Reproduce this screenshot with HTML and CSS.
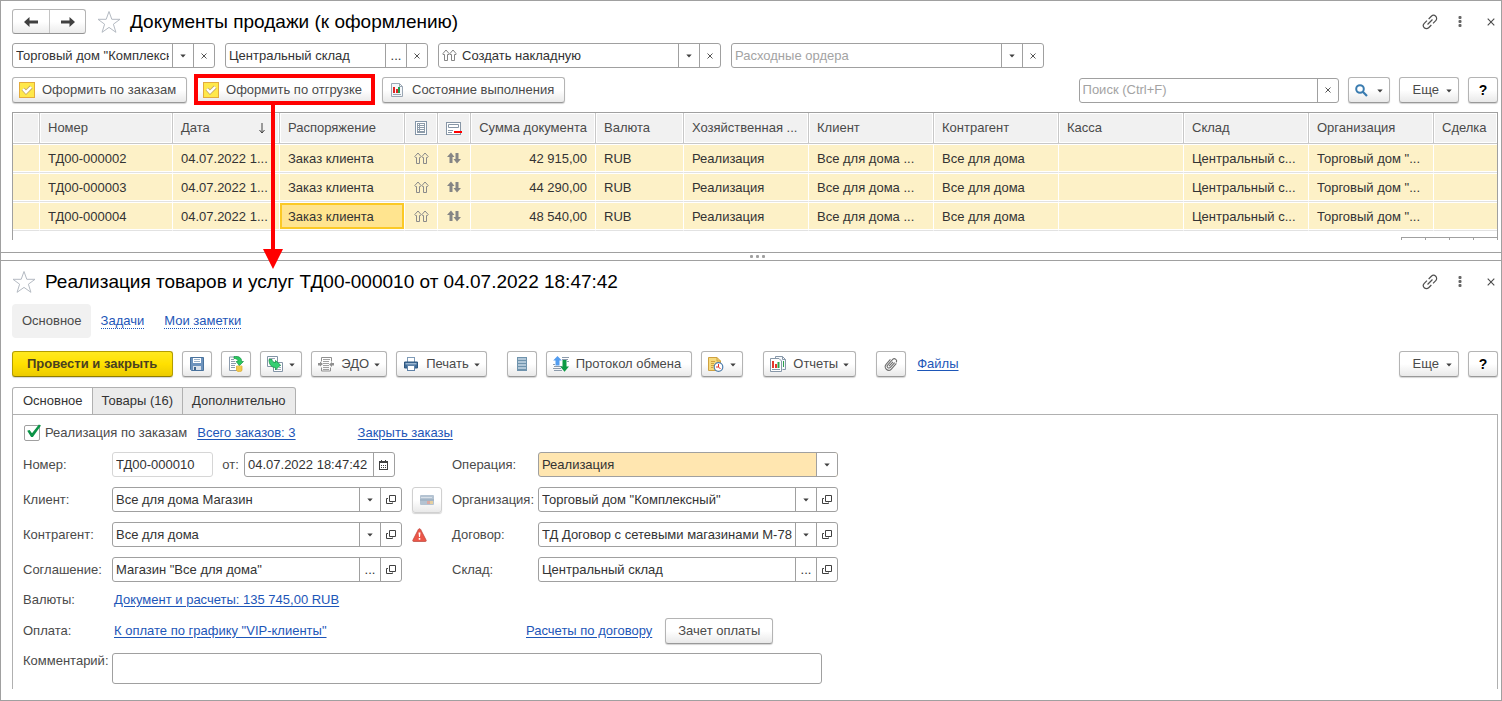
FILE: index.html
```html
<!DOCTYPE html>
<html lang="ru">
<head>
<meta charset="utf-8">
<title>Документы продажи (к оформлению)</title>
<link rel="stylesheet" href="styles.css">
</head>
<body>
<svg class="sprite" aria-hidden="true">
  <symbol id="i-back" viewBox="0 0 16 12"><path d="M1 6 L6.500 1 V4.500 H15 V7.500 H6.500 V11 Z" fill="#404040"/></symbol>
  <symbol id="i-star" viewBox="0 0 24 24"><path d="M12 1.500 L14.800 9.300 H23 L16.400 14.200 L18.900 22.300 L12 17.400 L5.100 22.300 L7.600 14.200 L1 9.300 H9.200 Z" fill="#fff" stroke="#b4bac2"/></symbol>
  <symbol id="i-link" viewBox="0 0 16 16"><g transform="rotate(-45 8 8)" fill="none" stroke="#505050" stroke-width="1.200"><path d="M6.800 4.900 H3 A3.100 3.100 0 0 0 3 11.100 H6.800"/><path d="M9.200 4.900 H13 A3.100 3.100 0 0 1 13 11.100 H9.200"/><path d="M4.500 8 H11.500"/></g></symbol>
  <symbol id="i-more" viewBox="0 0 4 12"><g fill="#666"><rect x="0.500" y="0" width="3" height="3" rx="1"/><rect x="0.500" y="4" width="3" height="3" rx="1"/><rect x="0.500" y="8" width="3" height="3" rx="1"/></g></symbol>
  <symbol id="i-close" viewBox="0 0 8 8"><path d="M0.700 0.700 L7.300 7.300 M7.300 0.700 L0.700 7.300" stroke="#4a4a4a" stroke-width="1.100"/></symbol>
  <symbol id="i-clear" viewBox="0 0 6 6"><path d="M0.500 0.500 L5.500 5.500 M5.500 0.500 L0.500 5.500" stroke="#555"/></symbol>
  <symbol id="i-caret" viewBox="0 0 6 4"><path d="M0.300 0.500 H5.700 L3 3.500 Z" fill="#404040"/></symbol>
  <symbol id="i-open" viewBox="0 0 10 10"><path d="M3.500 0.500 H9.500 V6.500 H3.500 Z M2 3.500 H0.500 V8.500 H6.500 V7.500" fill="none" stroke="#404040"/></symbol>
  <symbol id="i-check" viewBox="0 0 16 16"><rect x="0.500" y="0.500" width="15" height="15" fill="#ffe84a" stroke="#e3ab3c"/><path d="M4 7 L7 10.200 L12.200 5" fill="none" stroke="#c2a765" stroke-width="4"/><path d="M4 7 L7 10.200 L12.200 5" fill="none" stroke="#fff" stroke-width="2.400"/></symbol>
  <symbol id="i-report" viewBox="0 0 14 15"><path d="M1.500 0.500 H9.500 L12.500 3.500 V13.500 H1.500 Z" fill="#f4f7fa" stroke="#9aa6b3"/><path d="M9.500 0.500 V3.500 H12.500" fill="none" stroke="#9aa6b3"/><rect x="3" y="4" width="2" height="6" fill="#e02424"/><rect x="6" y="6" width="2" height="4" fill="#e02424"/><rect x="8" y="4" width="2" height="6" fill="#1f9d4c"/><path d="M3 11.500 H11" stroke="#9aa6b3"/></symbol>
  <symbol id="i-ups" viewBox="0 0 15 13"><g fill="#fff" stroke="#858585"><path d="M4 1 L7 4.500 V5.500 H5.500 V11.500 H2.500 V5.500 H1 V4.500 Z"/><path d="M11 1 L14 4.500 V5.500 H12.500 V11.500 H9.500 V5.500 H8 V4.500 Z"/></g></symbol>
  <symbol id="i-cellups" viewBox="0 0 15 13"><g fill="none" stroke="#8a8a8a"><path d="M4 1 L7 4.500 L6.500 5.500 H5.500 V11.500 H2.500 V5.500 H1.500 L0.800 4.500 Z"/><path d="M11 1 L14.200 4.500 L13.500 5.500 H12.500 V11.500 H9.500 V5.500 H8.500 L8 4.500 Z"/></g></symbol>
  <symbol id="i-updown" viewBox="0 0 14 12"><g fill="#858585"><path d="M4 0.500 L7.500 5 H5.500 V11 H2.500 V5 H0 Z"/><path d="M8.500 1 H11.500 V7 H14 L10 11.500 L6.500 7 H8.500 Z"/></g></symbol>
  <symbol id="i-doc" viewBox="0 0 12 14"><rect x="0.500" y="0.500" width="11" height="13" fill="#fff" stroke="#8496a8"/><path d="M2.500 2.500 H9.500 M2.500 4.500 H9.500 M2.500 6.500 H9.500 M2.500 8.500 H9.500 M2.500 10.500 H9.500 M4.500 2 V12 M9.500 2 V12 M2.500 2 V12 M2.500 11.500 H9.500" stroke="#8d9caa" fill="none"/></symbol>
  <symbol id="i-minus" viewBox="0 0 16 13"><rect x="0.500" y="0.500" width="14" height="12" fill="#fff" stroke="#8796a6"/><path d="M2.500 5.500 V2.500 H12.500 V5.500 H2.500 M2 8.500 H7 M2 10.500 H6" stroke="#8796a6" fill="none"/><rect x="8" y="9" width="8" height="2" fill="#f00"/></symbol>
  <symbol id="i-sort" viewBox="0 0 6 11"><path d="M3 0 V9.500 M0.500 7 L3 10 L5.500 7" stroke="#404040" fill="none"/></symbol>
  <symbol id="i-search" viewBox="0 0 13 13"><circle cx="5" cy="5" r="3.800" fill="none" stroke="#3a7cb0" stroke-width="2"/><path d="M7.800 7.800 L12 12" stroke="#3a7cb0" stroke-width="2.200"/></symbol>
  <symbol id="i-save" viewBox="0 0 14 14"><path d="M0.500 0.500 H13.500 V13.500 H1.500 L0.500 12.500 Z" fill="#6d93bd" stroke="#49729d"/><rect x="3" y="1" width="8" height="5" fill="#fff"/><path d="M4 2.500 H10 M4 4.500 H10" stroke="#9bb3cb"/><rect x="3" y="9" width="8" height="4" fill="#d9e1ea"/><rect x="4" y="10" width="2" height="3" fill="#3f648c"/></symbol>
  <symbol id="i-post" viewBox="0 0 16 16"><path d="M1.500 1 H11 V14.500 H1.500 Z" fill="#fff" stroke="#8c9bac"/><path d="M3 3.500 H6 M3 5.500 H7 M3 7.500 H8 M3 9.500 H7 M3 11.500 H7" stroke="#8c9bac"/><path d="M6 0.500 C11 0 14 2 13.500 5.500 H15.500 L11.500 9.500 L8 5.500 H10 C10 3.500 8.500 2.500 6 2.500 Z" fill="#2bc95f" stroke="#169346" stroke-width="0.700"/><path d="M8.500 10 V14.500 C9 16 13.500 16 14 14.500 V10 Z" fill="#ffe060" stroke="#d9a62b" stroke-width="0.700"/><path d="M8.500 12 H14 M8.500 14 H14" stroke="#d9a62b" stroke-width="0.800"/></symbol>
  <symbol id="i-based" viewBox="0 0 16 16"><path d="M0.500 0.500 H10.500 V10.500 H0.500 Z" fill="#fff" stroke="#8394a6"/><path d="M6.500 6.500 H15.500 V15.500 H6.500 Z" fill="#fff" stroke="#8394a6"/><path d="M2 2.500 H8 M12 9.500 H14 M12 11.500 H14 M8 13.500 H14" stroke="#9ca9b7"/><path d="M2 3.500 H5 C5 5.500 6.500 6.500 8.500 6.500 V4.500 L13.500 9 L8.500 14 V11.500 C4.500 11.500 2 8.500 2 3.500 Z" fill="#35cf72" stroke="#159447" stroke-width="0.800"/></symbol>
  <symbol id="i-edo" viewBox="0 0 16 15"><path d="M3.500 4.500 V0.500 H13.500 V4.500 M3.500 10.500 V14 H12.500 V10.500" fill="none" stroke="#909090"/><path d="M5 2.500 H12 M5 4.500 H11 M5 6.500 H11 M5 8.500 H11 M5 10.500 H11 M5 12.500 H11" stroke="#a0a0a0"/><path d="M0 8.500 V6 H2 V4.500 L5 7 L2 9.500 V8.500 Z M16 6 V8.500 H14 V10 L11 7.500 L14 5 V6 Z" fill="#909090"/></symbol>
  <symbol id="i-print" viewBox="0 0 14 14"><rect x="3.500" y="0.500" width="7" height="5" fill="#fff" stroke="#7f9bb8"/><path d="M0.500 5 H13.500 V11 H0.500 Z" fill="#3f6c99" stroke="#2f567e"/><rect x="1.500" y="6" width="11" height="1.500" fill="#9db7d2"/><rect x="3.500" y="8.500" width="7" height="5" fill="#fff" stroke="#5f82a8"/></symbol>
  <symbol id="i-list" viewBox="0 0 10 14"><rect x="0" y="0" width="10" height="14" fill="#6f93ad"/><path d="M1 2 H9 M1 5 H9 M1 8 H9 M1 11 H9" stroke="#c7d9e6" stroke-width="1.500"/></symbol>
  <symbol id="i-exchange" viewBox="0 0 16 16"><path d="M1 10.500 H9 M0 12.500 H8 M1 14.500 H9 M9 1.500 H16 M9 3.500 H15 M0 8.500 H2 M14 5.500 H16" stroke="#8c9bac"/><path d="M4.500 0 L8.800 4.500 H6.500 V9.500 H2.500 V4.500 H0.200 Z" fill="#539df0"/><path d="M9.500 4 H13.500 V10.500 H16 L11.500 15.800 L7.200 10.500 H9.500 Z" fill="#0c9a43"/></symbol>
  <symbol id="i-task" viewBox="0 0 16 15"><path d="M0.500 0.500 H9 L12.500 4 V13.500 H0.500 Z" fill="#f6da7c" stroke="#cfa13f"/><path d="M9 0.500 V4 H12.500 M3 6.500 H6 M3 8.500 H6 M3 10.500 H5 M3 4.500 H7" fill="none" stroke="#cfa13f"/><circle cx="10.500" cy="10" r="4.300" fill="#fff" stroke="#4f7fae" stroke-width="1.200"/><path d="M10.500 7 V10 H8 M10.500 10 L12.500 12" stroke="#e0312a" fill="none"/></symbol>
  <symbol id="i-reports" viewBox="0 0 16 16"><path d="M5.500 3 V0.500 H12.500 L15.500 3.500 V13.500 H12.500" fill="#f6f9fc" stroke="#8797a8"/><path d="M12.500 0.500 V3.500 H15.500" fill="none" stroke="#8797a8"/><path d="M0.500 2.500 H9 L11.500 5 V15.500 H0.500 Z" fill="#fff" stroke="#8797a8"/><path d="M3 5 V12" stroke="#e4382d" stroke-width="2"/><path d="M6 8 V12" stroke="#e4382d" stroke-width="2"/><path d="M8.500 6 V12" stroke="#2aa24b" stroke-width="2"/><path d="M13.500 5 V11" stroke="#2aa24b"/><path d="M2 13.500 H10" stroke="#8797a8"/></symbol>
  <symbol id="i-clip" viewBox="0 0 14 14"><g transform="rotate(42 7 7)"><path d="M8.800 3.500 V10 A1.800 1.800 0 0 1 5.200 10 V2.500 A2.200 2.200 0 0 1 9.600 2.500 M10.600 3 V10.500 A3.500 3.500 0 0 1 3.500 10.500 V4 M7 4 V10" fill="none" stroke="#6e6e6e" stroke-width="1.100"/></g></symbol>
  <symbol id="i-calendar" viewBox="0 0 9 10"><rect x="0.500" y="1.500" width="8" height="8" fill="#fff" stroke="#404040"/><path d="M0 2.500 H9 M2.500 0 V3 M6.500 0 V3" stroke="#404040"/><path d="M2 5.500 H7.500 M2 7.500 H7.500" stroke="#404040" stroke-dasharray="1 1"/></symbol>
  <symbol id="i-card" viewBox="0 0 14 10"><rect width="14" height="10" rx="1" fill="#b4c3d2"/><path d="M1 2.500 H12" stroke="#d8e0e8"/><path d="M0 5 H14" stroke="#93a7ba"/><rect x="7" y="6" width="3" height="3" fill="#dba9a3"/><rect x="10" y="6" width="3" height="3" fill="#e5cfa0"/></symbol>
  <symbol id="i-warn" viewBox="0 0 15 14"><path d="M7.500 0.700 Q8.300 0.700 8.700 1.500 L14.200 12.300 Q14.500 13.400 13.500 13.500 H1.500 Q0.500 13.400 0.800 12.300 L6.300 1.500 Q6.700 0.700 7.500 0.700 Z" fill="#ec5648" stroke="#b8463c" stroke-width="0.700"/><path d="M6.500 4.500 H8.500 L8 9 H7 Z M6.700 10 H8.300 V11.700 H6.700 Z" fill="#fff"/></symbol>
</svg>

<section class="window">
  <header class="title-row">
    <div class="nav-pair">
      <button class="nav-btn" type="button" aria-label="Назад"><svg width="16" height="12"><use href="#i-back"/></svg></button>
      <button class="nav-btn" type="button" aria-label="Вперед"><svg class="flip" width="16" height="12"><use href="#i-back"/></svg></button>
    </div>
    <button class="icon-btn star" type="button" aria-label="В избранное"><svg width="24" height="24"><use href="#i-star"/></svg></button>
    <h1 class="title">Документы продажи (к оформлению)</h1>
    <div class="win-tools">
      <button class="icon-btn" type="button" aria-label="Ссылка"><svg width="16" height="16"><use href="#i-link"/></svg></button>
      <button class="icon-btn" type="button" aria-label="Меню"><svg width="4" height="12"><use href="#i-more"/></svg></button>
      <button class="icon-btn" type="button" aria-label="Закрыть"><svg width="8" height="8"><use href="#i-close"/></svg></button>
    </div>
  </header>

  <div class="filters">
    <div class="field w-filter"><input type="text" aria-label="Организация" value="Торговый дом &quot;Комплексный&quot;"><button type="button" aria-label="Выбрать"><svg width="6" height="4"><use href="#i-caret"/></svg></button><button type="button" aria-label="Очистить"><svg width="6" height="6"><use href="#i-clear"/></svg></button></div>
    <div class="field w-filter"><input type="text" aria-label="Склад" value="Центральный склад"><button type="button" aria-label="Выбрать">...</button><button type="button" aria-label="Очистить"><svg width="6" height="6"><use href="#i-clear"/></svg></button></div>
    <div class="field w-action"><svg class="lead" width="15" height="13"><use href="#i-ups"/></svg><select aria-label="Действие"><option>Создать накладную</option></select><span class="drop"><svg width="6" height="4"><use href="#i-caret"/></svg></span><button type="button" aria-label="Очистить"><svg width="6" height="6"><use href="#i-clear"/></svg></button></div>
    <div class="field w-order"><input type="text" aria-label="Расходные ордера" placeholder="Расходные ордера"><button type="button" aria-label="Выбрать"><svg width="6" height="4"><use href="#i-caret"/></svg></button><button type="button" aria-label="Очистить"><svg width="6" height="6"><use href="#i-clear"/></svg></button></div>
  </div>

  <div class="commands">
    <button class="btn" type="button"><svg width="16" height="16"><use href="#i-check"/></svg>Оформить по заказам</button>
    <div class="callout">
      <button class="btn" type="button"><svg width="16" height="16"><use href="#i-check"/></svg>Оформить по отгрузке</button>
      <div class="callout-frame"></div>
      <svg class="callout-arrow" width="22" height="166" viewBox="0 0 22 166" aria-hidden="true"><path d="M9 0 H13 V146 H21 L11 166 L1 146 H9 Z" fill="#f00"/></svg>
    </div>
    <button class="btn" type="button"><svg width="16" height="15"><use href="#i-report"/></svg>Состояние выполнения</button>
    <div class="field w-search"><input type="text" aria-label="Поиск" placeholder="Поиск (Ctrl+F)"><button type="button" aria-label="Очистить"><svg width="6" height="6"><use href="#i-clear"/></svg></button></div>
    <button class="btn tool" type="button" aria-label="Найти"><svg width="13" height="13"><use href="#i-search"/></svg><svg class="caret" width="6" height="4"><use href="#i-caret"/></svg></button>
    <button class="btn more" type="button">Еще<svg class="caret" width="6" height="4"><use href="#i-caret"/></svg></button>
    <button class="btn square help" type="button">?</button>
  </div>

  <div class="grid-box">
    <table class="list">
      <colgroup><col class="c-mark"><col class="c-num"><col class="c-date"><col class="c-text"><col class="c-icon"><col class="c-icon"><col class="c-text"><col class="c-cur"><col class="c-text"><col class="c-text"><col class="c-text"><col class="c-text"><col class="c-text"><col class="c-text"><col></colgroup>
      <thead>
        <tr><th></th><th>Номер</th><th><div class="sorted">Дата<svg width="6" height="11"><use href="#i-sort"/></svg></div></th><th>Распоряжение</th><th class="ico"><svg width="12" height="14"><use href="#i-doc"/></svg></th><th class="ico"><svg width="16" height="13"><use href="#i-minus"/></svg></th><th class="num">Сумма документа</th><th>Валюта</th><th>Хозяйственная ...</th><th>Клиент</th><th>Контрагент</th><th>Касса</th><th>Склад</th><th>Организация</th><th>Сделка</th></tr>
      </thead>
      <tbody>
        <tr><td></td><td>ТД00-000002</td><td>04.07.2022 1...</td><td>Заказ клиента</td><td class="ico"><svg width="15" height="13"><use href="#i-cellups"/></svg></td><td class="ico"><svg width="14" height="12"><use href="#i-updown"/></svg></td><td class="num">42 915,00</td><td>RUB</td><td>Реализация</td><td>Все для дома ...</td><td>Все для дома</td><td></td><td>Центральный с...</td><td>Торговый дом "...</td><td></td></tr>
        <tr><td></td><td>ТД00-000003</td><td>04.07.2022 1...</td><td>Заказ клиента</td><td class="ico"><svg width="15" height="13"><use href="#i-cellups"/></svg></td><td class="ico"><svg width="14" height="12"><use href="#i-updown"/></svg></td><td class="num">44 290,00</td><td>RUB</td><td>Реализация</td><td>Все для дома ...</td><td>Все для дома</td><td></td><td>Центральный с...</td><td>Торговый дом "...</td><td></td></tr>
        <tr><td></td><td>ТД00-000004</td><td>04.07.2022 1...</td><td class="current"><div>Заказ клиента</div></td><td class="ico"><svg width="15" height="13"><use href="#i-cellups"/></svg></td><td class="ico"><svg width="14" height="12"><use href="#i-updown"/></svg></td><td class="num">48 540,00</td><td>RUB</td><td>Реализация</td><td>Все для дома ...</td><td>Все для дома</td><td></td><td>Центральный с...</td><td>Торговый дом "...</td><td></td></tr>
      </tbody>
    </table>
    <div class="pager"><span></span><span></span><span></span><span></span></div>
  </div>
</section>

<div class="splitter"><span></span><span></span><span></span></div>

<section class="window document">
  <header class="title-row">
    <button class="icon-btn star" type="button" aria-label="В избранное"><svg width="24" height="24"><use href="#i-star"/></svg></button>
    <h2 class="title">Реализация товаров и услуг ТД00-000010 от 04.07.2022 18:47:42</h2>
    <div class="win-tools">
      <button class="icon-btn" type="button" aria-label="Ссылка"><svg width="16" height="16"><use href="#i-link"/></svg></button>
      <button class="icon-btn" type="button" aria-label="Меню"><svg width="4" height="12"><use href="#i-more"/></svg></button>
      <button class="icon-btn" type="button" aria-label="Закрыть"><svg width="8" height="8"><use href="#i-close"/></svg></button>
    </div>
  </header>

  <nav class="sections">
    <a class="active" href="#main">Основное</a>
    <a href="#tasks"><span>Задачи</span></a>
    <a href="#notes"><span>Мои заметки</span></a>
  </nav>

  <div class="commands toolbar">
    <button class="btn primary" type="button">Провести и закрыть</button>
    <button class="btn square" type="button" aria-label="Записать"><svg width="14" height="14"><use href="#i-save"/></svg></button>
    <button class="btn square" type="button" aria-label="Провести"><svg width="16" height="16"><use href="#i-post"/></svg></button>
    <button class="btn tool" type="button" aria-label="Создать на основании"><svg width="16" height="16"><use href="#i-based"/></svg><svg class="caret" width="6" height="4"><use href="#i-caret"/></svg></button>
    <button class="btn" type="button"><svg width="16" height="15"><use href="#i-edo"/></svg>ЭДО<svg class="caret" width="6" height="4"><use href="#i-caret"/></svg></button>
    <button class="btn" type="button"><svg width="16" height="14"><use href="#i-print"/></svg>Печать<svg class="caret" width="6" height="4"><use href="#i-caret"/></svg></button>
    <button class="btn square apart" type="button" aria-label="Реестр"><svg width="10" height="14"><use href="#i-list"/></svg></button>
    <button class="btn" type="button"><svg width="16" height="16"><use href="#i-exchange"/></svg>Протокол обмена</button>
    <button class="btn tool" type="button" aria-label="Напоминания"><svg width="16" height="15"><use href="#i-task"/></svg><svg class="caret" width="6" height="4"><use href="#i-caret"/></svg></button>
    <button class="btn apart" type="button"><svg width="16" height="16"><use href="#i-reports"/></svg>Отчеты<svg class="caret" width="6" height="4"><use href="#i-caret"/></svg></button>
    <button class="btn square apart" type="button" aria-label="Присоединенные файлы"><svg width="14" height="14"><use href="#i-clip"/></svg></button>
    <a class="link files" href="#files">Файлы</a>
    <button class="btn more end" type="button">Еще<svg class="caret" width="6" height="4"><use href="#i-caret"/></svg></button>
    <button class="btn square help" type="button">?</button>
  </div>

  <div class="tabs" role="tablist">
    <button class="tab selected" type="button" role="tab" aria-selected="true">Основное</button>
    <button class="tab" type="button" role="tab" aria-selected="false">Товары (16)</button>
    <button class="tab" type="button" role="tab" aria-selected="false">Дополнительно</button>
  </div>

  <div class="panel">
    <div class="orders">
      <label class="tick"><input type="checkbox" checked>Реализация по заказам</label>
      <a class="link" href="#orders">Всего заказов: 3</a>
      <a class="link close-orders" href="#close">Закрыть заказы</a>
    </div>

    <div class="form">
      <label for="number">Номер:</label>
      <div class="number-date">
        <div class="field muted w-number"><input id="number" type="text" value="ТД00-000010"></div>
        <label for="date">от:</label>
        <div class="field w-date"><input id="date" type="text" value="04.07.2022 18:47:42"><button type="button" aria-label="Календарь"><svg width="9" height="10"><use href="#i-calendar"/></svg></button></div>
      </div>
      <span></span>
      <label for="operation">Операция:</label>
      <div class="field filled"><select id="operation"><option>Реализация</option></select><span class="drop"><svg width="6" height="4"><use href="#i-caret"/></svg></span></div>

      <label for="client">Клиент:</label>
      <div class="field"><input id="client" type="text" value="Все для дома Магазин"><button type="button" aria-label="Выбрать"><svg width="6" height="4"><use href="#i-caret"/></svg></button><button type="button" aria-label="Открыть"><svg width="10" height="10"><use href="#i-open"/></svg></button></div>
      <div class="side"><button class="btn square faded" type="button" aria-label="Карта лояльности"><svg width="14" height="10"><use href="#i-card"/></svg></button></div>
      <label for="org">Организация:</label>
      <div class="field"><input id="org" type="text" value="Торговый дом &quot;Комплексный&quot;"><button type="button" aria-label="Выбрать"><svg width="6" height="4"><use href="#i-caret"/></svg></button><button type="button" aria-label="Открыть"><svg width="10" height="10"><use href="#i-open"/></svg></button></div>

      <label for="partner">Контрагент:</label>
      <div class="field"><input id="partner" type="text" value="Все для дома"><button type="button" aria-label="Выбрать"><svg width="6" height="4"><use href="#i-caret"/></svg></button><button type="button" aria-label="Открыть"><svg width="10" height="10"><use href="#i-open"/></svg></button></div>
      <div class="side"><svg width="15" height="14"><use href="#i-warn"/></svg></div>
      <label for="contract">Договор:</label>
      <div class="field"><input id="contract" type="text" value="ТД Договор с сетевыми магазинами М-78"><button type="button" aria-label="Выбрать"><svg width="6" height="4"><use href="#i-caret"/></svg></button><button type="button" aria-label="Открыть"><svg width="10" height="10"><use href="#i-open"/></svg></button></div>

      <label for="agreement">Соглашение:</label>
      <div class="field"><input id="agreement" type="text" value="Магазин &quot;Все для дома&quot;"><button type="button" aria-label="Выбрать">...</button><button type="button" aria-label="Открыть"><svg width="10" height="10"><use href="#i-open"/></svg></button></div>
      <span></span>
      <label for="store">Склад:</label>
      <div class="field"><input id="store" type="text" value="Центральный склад"><button type="button" aria-label="Выбрать">...</button><button type="button" aria-label="Открыть"><svg width="10" height="10"><use href="#i-open"/></svg></button></div>
    </div>

    <div class="line"><span class="caption">Валюты:</span><div class="line-link"><a class="link" href="#currency">Документ и расчеты: 135 745,00 RUB</a></div></div>
    <div class="line"><span class="caption">Оплата:</span><div class="line-link"><a class="link" href="#payment">К оплате по графику "VIP-клиенты"</a></div><a class="link" href="#settlements">Расчеты по договору</a><button class="btn offset" type="button">Зачет оплаты</button></div>
    <div class="comment"><label for="comment">Комментарий:</label><textarea id="comment" rows="1"></textarea></div>
  </div>
</section>
</body>
</html>
```

FILE: styles.css
```css
* {
  box-sizing: border-box;
}

body {
  margin: 0;
  min-height: 100vh;
  border: 1px solid #a0a0a0;
  background: #fff;
  color: #4a4a4a;
  font: 13px/16px "Liberation Sans", Arial, sans-serif;
}

svg {
  display: block;
  flex: none;
}

button,
input,
select,
textarea {
  margin: 0;
  font: inherit;
  color: inherit;
}

.sprite {
  position: absolute;
  width: 0;
  height: 0;
}

.window {
  display: flex;
  flex-direction: column;
  gap: 9px;
  padding: 8px 3px 12px 11px;
}

/* Title */

.title-row {
  display: flex;
  align-items: center;
  height: 25px;
}

.nav-pair {
  display: flex;
  height: 25px;
  margin-right: 11px;
  border: 1px solid #b4b4b4;
  border-bottom-color: #949494;
  border-radius: 3px;
  background: linear-gradient(#fff 50%, #ececec);
}

.nav-btn {
  display: grid;
  place-items: center;
  width: 36px;
  padding: 0;
  border: 0;
  background: none;
}

.nav-btn + .nav-btn {
  border-left: 1px solid #c4c4c4;
}

.flip {
  transform: scaleX(-1);
}

.icon-btn {
  display: grid;
  place-items: center;
  padding: 0;
  border: 0;
  background: none;
}

.star {
  margin-right: 9px;
}

.title {
  margin: 0;
  color: #000;
  font-size: 19px;
  font-weight: 400;
  line-height: 24px;
}

.win-tools {
  display: flex;
  align-items: center;
  margin-left: auto;
}

.win-tools .icon-btn {
  width: 30px;
  height: 24px;
}

.win-tools .icon-btn:last-child {
  justify-items: end;
  margin-right: 3px;
  width: 20px;
}

/* Entry fields */

.field {
  display: flex;
  align-items: stretch;
  height: 25px;
  border: 1px solid #a0a0a0;
  border-radius: 3px;
  background: #fff;
  color: #333;
}

.field input,
.field select {
  flex: 1;
  min-width: 0;
  padding: 0 3px;
  border: 0;
  border-radius: 2px;
  outline: 0;
  background: none;
  appearance: none;
}

.field input::placeholder {
  color: #a3a3a3;
  opacity: 1;
}

.field button,
.drop {
  display: grid;
  place-items: center;
  flex: none;
  width: 21px;
  padding: 0;
  border: 0;
  border-left: 1px solid #a0a0a0;
  background: none;
}

.lead {
  align-self: center;
  margin-left: 3px;
}

.lead + select {
  padding-left: 5px;
}

.muted {
  border-color: #d6d6d6;
}

.filled {
  background: #ffe6b0;
}

.filled .drop {
  border-radius: 0 2px 2px 0;
  background: #fff;
}

.filters {
  display: flex;
  gap: 10px;
}

.w-filter {
  width: 203px;
}

.w-action {
  width: 283px;
}

.w-order {
  width: 313px;
}

.w-search {
  width: 260px;
  margin-left: auto;
}

/* Commands */

.commands {
  display: flex;
  align-items: center;
  gap: 9px;
}

.btn {
  display: flex;
  align-items: center;
  gap: 7px;
  height: 26px;
  padding: 0 10px 0 6px;
  border: 1px solid #b4b4b4;
  border-bottom-color: #999;
  border-radius: 3px;
  background: linear-gradient(#fff 50%, #e9e9e9);
  box-shadow: 0 1px 1px #d4d4d4;
  white-space: nowrap;
}

.btn .caret {
  margin: 2px 0 0 -2px;
}

.btn:has(.caret) {
  padding-right: 6px;
}

.tool {
  justify-content: space-between;
  width: 42px;
}

.more {
  padding-left: 13px;
}

.more .caret {
  margin-left: 0;
}

.square {
  justify-content: center;
  width: 30px;
  padding: 0;
}

.help {
  color: #000;
  font-size: 14px;
  font-weight: 700;
}

.primary {
  padding: 0 15px 0 14px;
  border-color: #b39d00;
  border-bottom-color: #8f7d00;
  background: linear-gradient(#ffe920, #ffe000 50%, #eccb00);
  color: #4a4020;
  font-weight: 700;
}

.apart {
  margin-left: 11px;
}

.files {
  margin-left: 2px;
}

.end {
  margin-left: auto;
}

.faded {
  border-color: #d0d0d0;
}

.callout {
  position: relative;
}

.callout-frame {
  position: absolute;
  inset: -3px -2px -2px;
  border: 4px solid #f00;
  pointer-events: none;
}

.callout-arrow {
  position: absolute;
  top: 26px;
  left: 66px;
  pointer-events: none;
}

/* List */

.grid-box {
  border: 1px solid #a0a0a0;
  border-bottom: 0;
}

.list {
  width: 100%;
  border-spacing: 0;
  table-layout: fixed;
}

.c-mark {
  width: 27px;
}

.c-num {
  width: 133px;
}

.c-date {
  width: 107px;
}

.c-text {
  width: 125px;
}

.c-icon {
  width: 33px;
}

.c-cur {
  width: 88px;
}

.list th,
.list td {
  padding: 0 8px;
  text-align: left;
  white-space: nowrap;
}

.list th {
  height: 31px;
  border-right: 1px solid #c8c8c8;
  border-bottom: 1px solid #c8c8c8;
  background: #f1f1f1;
  box-shadow: inset 0 0 0 1px #fff;
  font-weight: 400;
}

.list td {
  height: 29px;
  padding-top: 2px;
  border-right: 1px solid #fff;
  border-bottom: 1px solid #e2e2e2;
  background: #fdf1c7;
  box-shadow: inset 0 1px #fff, inset 0 -1px #fff;
  color: #333;
}

.list th:last-child,
.list td:last-child {
  border-right: 0;
}

.list .num {
  text-align: right;
}

.list .ico {
  padding: 0;
}

.ico svg {
  margin: 0 auto;
}

.sorted {
  display: flex;
  align-items: center;
  justify-content: space-between;
  padding-right: 6px;
}

.list .current {
  padding: 0;
}

.current div {
  height: 26px;
  padding: 4px 6px 2px;
  border: 2px solid #fbc926;
  background: #ffe48f;
}

.pager {
  display: flex;
  justify-content: flex-end;
  margin-top: 6px;
}

.pager span {
  width: 24px;
  height: 3px;
  border: solid #a0a0a0;
  border-width: 1px 0 0 1px;
}

.splitter {
  display: flex;
  align-items: center;
  justify-content: center;
  gap: 3px;
  height: 9px;
  padding-left: 12px;
  border: solid #a0a0a0;
  border-width: 1px 0;
}

.splitter span {
  width: 3px;
  height: 3px;
  border-radius: 1px;
  background: #a0a0a0;
}

/* Document */

.document {
  gap: 0;
  padding-bottom: 11px;
}

.link {
  color: #1d56b8;
  text-decoration: underline;
  text-underline-offset: 2px;
}

.sections {
  display: flex;
  margin: 10px 0 13px;
}

.sections a {
  padding: 9px 10px;
  border-radius: 4px;
  color: #1d56b8;
  text-decoration: none;
}

.sections a span {
  border-bottom: 1px dotted #1d56b8;
}

.sections .active {
  padding-right: 9px;
  background: #f1f1f1;
  color: #4a4a4a;
}

.tabs {
  display: flex;
  margin-top: 10px;
}

.tab {
  height: 28px;
  margin-bottom: -1px;
  padding: 0 9px;
  border: 1px solid #b0b0b0;
  border-left-width: 0;
  background: #ebebeb;
  color: #333;
}

.tab:last-child {
  border-top-right-radius: 3px;
}

.tab.selected {
  padding-left: 10px;
  border-left-width: 1px;
  border-bottom-color: #fff;
  border-top-left-radius: 3px;
  background: #fff;
}

.panel {
  padding: 10px 10px 5px;
  border: 1px solid #b0b0b0;
  border-bottom: 0;
}

.orders {
  display: flex;
  align-items: center;
  gap: 10px;
  height: 16px;
  margin-bottom: 11px;
}

.close-orders {
  margin-left: 52px;
}

.tick {
  display: flex;
  align-items: center;
  gap: 5px;
}

.tick input {
  width: 16px;
  height: 16px;
  margin-left: 1px;
  border: 1px solid #a0a0a0;
  border-radius: 2px;
  background: #fff;
  appearance: none;
}

.tick input:checked::before {
  content: "";
  display: block;
  width: 15px;
  height: 14px;
  margin: -2px 0 0 1px;
  background: #0b9347;
  clip-path: polygon(8% 48%, 24% 42%, 40% 66%, 86% 4%, 100% 10%, 46% 92%, 34% 92%);
}

.form {
  display: grid;
  grid-template-columns: 89px 290px 50px 86px 300px;
  row-gap: 10px;
  align-items: center;
}

.number-date {
  display: flex;
  align-items: center;
  justify-content: space-between;
  padding-right: 7px;
}

.w-number {
  width: 101px;
}

.w-date {
  width: 151px;
}

.number-date label {
  padding-left: 4px;
}

.side {
  display: flex;
  align-items: center;
  height: 25px;
  padding-left: 10px;
}

.line {
  display: flex;
  align-items: center;
  height: 31px;
}

.form + .line {
  margin-top: 2px;
}

.caption {
  width: 89px;
}

.line-link {
  width: 414px;
  padding-left: 2px;
}

.offset {
  margin-left: 13px;
  padding: 0 12px;
}

.comment {
  display: flex;
  margin-top: 7px;
}

.comment label {
  width: 89px;
}

.comment textarea {
  width: 710px;
  height: 31px;
  padding: 6px 3px;
  border: 1px solid #a0a0a0;
  border-radius: 3px;
  outline: 0;
  resize: none;
}
```
